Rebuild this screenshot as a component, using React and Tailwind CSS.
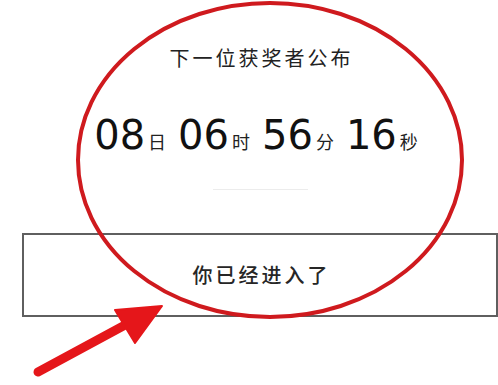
import React from "react";

const cjk = { fontFamily: '"Noto Sans CJK SC", "Noto Sans", sans-serif' };
const num = { fontFamily: '"DejaVu Sans", "Liberation Sans", sans-serif' };

function Part({ value, unit, last }) {
  return (
    <div className={`flex items-baseline ${last ? "" : "mr-[12px]"}`}>
      <span className="text-[40px] leading-[40px] text-[#111]" style={num}>
        {value}
      </span>
      <span className="text-[18px] leading-[18px] text-[#222] ml-[3px]" style={cjk}>
        {unit}
      </span>
    </div>
  );
}

export default function App() {
  return (
    <div className="relative w-[498px] h-[385px] bg-white overflow-hidden">
      <div className="ml-[22px] w-[476px] flex flex-col items-center">
        <div
          className="mt-[48px] h-[20px] text-[20px] leading-[20px] tracking-[3px] text-[#222] pl-[3px]"
          style={cjk}
        >
          下一位获奖者公布
        </div>
        <div className="mt-[47px] h-[40px] flex items-baseline mr-[8px]">
          <Part value="08" unit="日" />
          <Part value="06" unit="时" />
          <Part value="56" unit="分" />
          <Part value="16" unit="秒" last />
        </div>
        <div className="mt-[34px] h-px w-[95px] bg-[#ececec]" />
        <div className="mt-[43px] w-[476px] h-[84px] border-2 border-[#5f5f5f] flex items-center justify-center">
          <span
            className="text-[20px] leading-[20px] tracking-[3px] text-[#262626] font-medium pl-[3px]"
            style={cjk}
          >
            你已经进入了
          </span>
        </div>
      </div>
      <svg
        className="absolute inset-0 pointer-events-none"
        width="498"
        height="385"
        viewBox="0 0 498 385"
      >
        <ellipse cx="270" cy="160" rx="192" ry="157" fill="none" stroke="#cf1a1e" strokeWidth="4" />
        <line x1="38" y1="372" x2="138" y2="318" stroke="#e5161a" strokeWidth="9" strokeLinecap="round" />
        <polygon points="162,306 115,310 135,343" fill="#e5161a" stroke="#e5161a" strokeWidth="2" strokeLinejoin="round" />
      </svg>
    </div>
  );
}
